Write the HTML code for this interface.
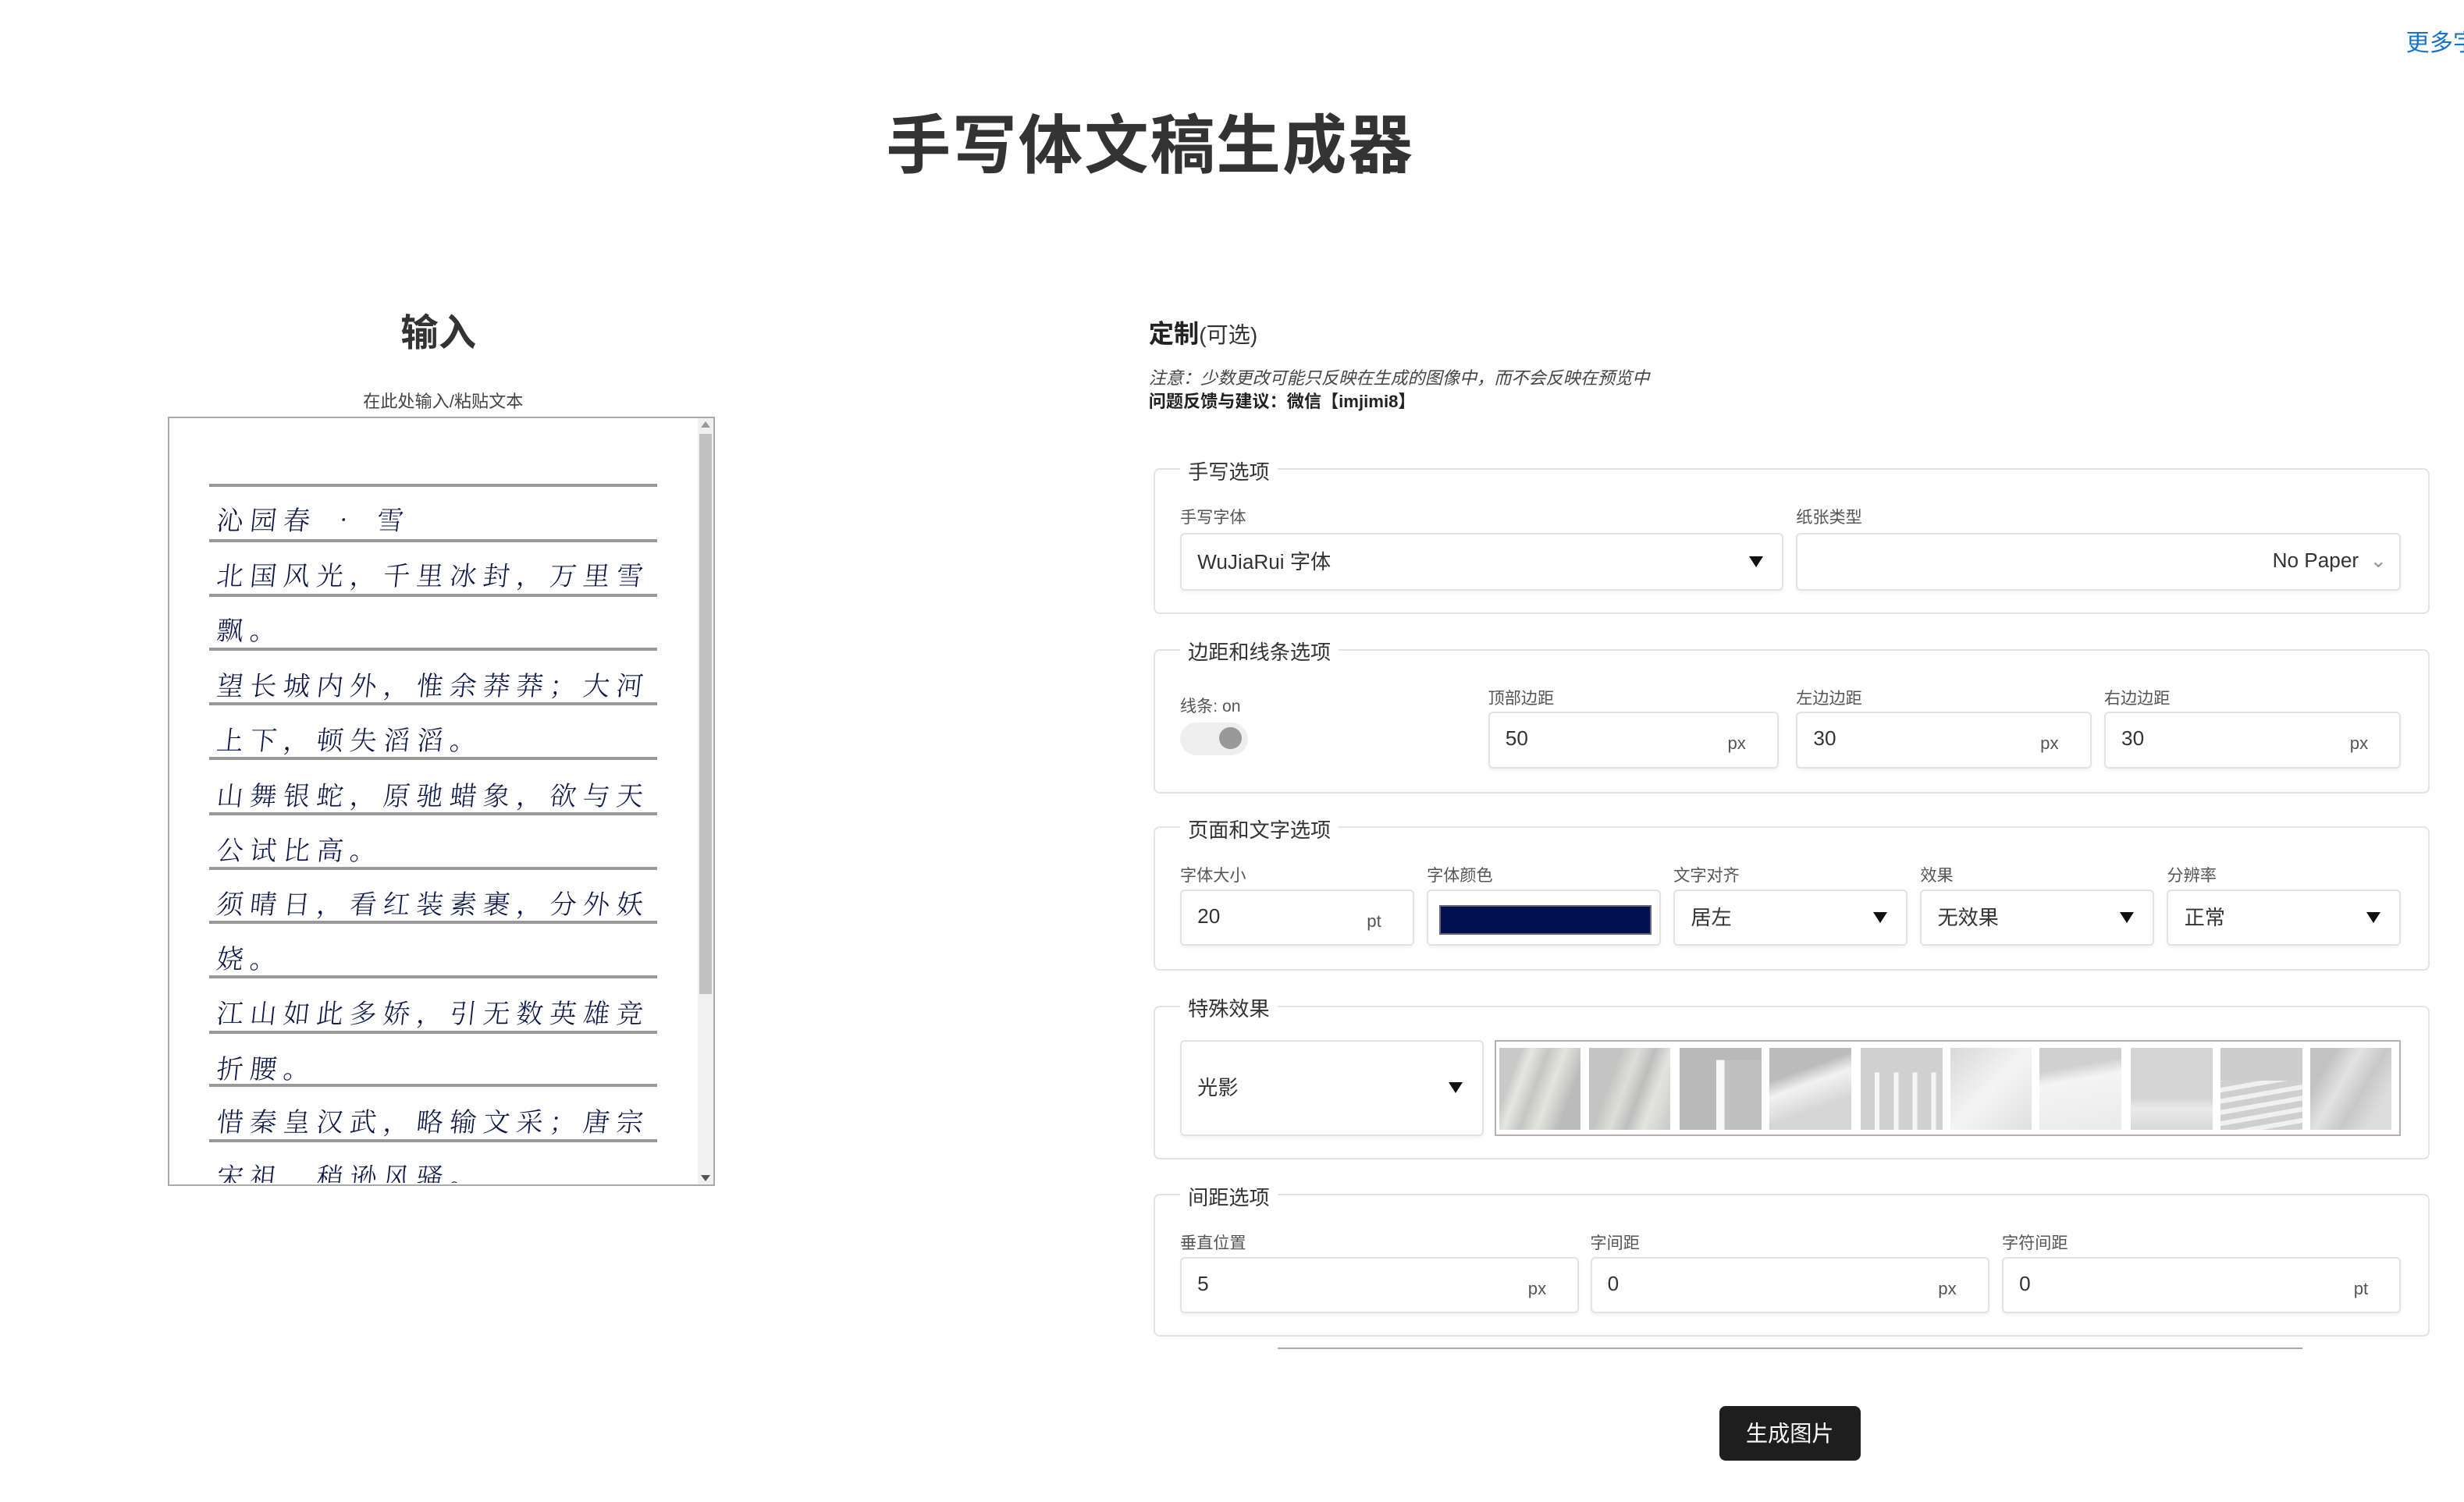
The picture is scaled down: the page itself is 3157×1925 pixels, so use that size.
<!DOCTYPE html>
<html><head><meta charset="utf-8">
<style>
html,body{margin:0;padding:0;background:#fff;width:3157px;height:1925px;overflow:hidden}
#w{position:relative;width:1568px;height:956px;zoom:2.01339;font-family:"Liberation Sans","Noto Sans CJK SC",sans-serif;color:#333}
.a{position:absolute;white-space:nowrap}
.fs{position:absolute;border:1px solid #e4e4e4;border-radius:4px;left:734px;width:810px}
.lg{position:absolute;left:16px;top:-9px;background:#fff;padding:0 5px;font-size:13px;color:#333}
.lb{position:absolute;font-size:10.5px;color:#555}
.in{position:absolute;border:1px solid #e3e3e3;border-radius:3px;box-shadow:0 1px 2px rgba(0,0,0,.06);background:#fff;font-size:13px;color:#333}
.in .v{position:absolute;left:10px;top:50%;transform:translateY(-55%)}
.in .u{position:absolute;right:20px;top:50%;transform:translateY(-30%);font-size:11px;color:#555}
.in .t{position:absolute;right:12px;top:50%;transform:translateY(-50%);width:0;height:0;border-left:4.5px solid transparent;border-right:4.5px solid transparent;border-top:7px solid #111}
.ln{position:absolute;left:133px;width:285px;height:2px;background:#999}
.hw{position:absolute;left:138px;font-family:"Noto Serif CJK SC","Liberation Serif",serif;font-size:17px;color:#0a1548;letter-spacing:4.2px;transform:skewX(-6deg);font-weight:300}
.tile{position:absolute;top:667px;width:52px;height:52px;background:#cfcfcf}
</style></head><body><div id="w">
<div class="a" style="left:1531px;top:15px;font-size:15px;color:#1a73c8">更多字体</div>
<div class="a" style="left:564px;top:59px;font-size:41px;font-weight:bold;color:#333;letter-spacing:1px">手写体文稿生成器</div>

<div class="a" style="left:255px;top:192px;font-size:24px;font-weight:bold">输入</div>
<div class="a" style="left:231px;top:247px;font-size:11px;color:#444">在此处输入/粘贴文本</div>
<div class="a" style="left:107px;top:265px;width:346px;height:488px;border:1px solid #aaa;overflow:hidden;background:#fff">
 <div style="position:absolute;right:0;top:0;width:10px;height:100%;background:#f1f1f1"></div>
 <div style="position:absolute;right:1px;top:10px;width:8px;height:357px;background:#c1c1c1"></div>
 <div style="position:absolute;right:2px;top:2px;border-left:3px solid transparent;border-right:3px solid transparent;border-bottom:4px solid #999"></div>
 <div style="position:absolute;right:2px;bottom:2px;border-left:3px solid transparent;border-right:3px solid transparent;border-top:4px solid #555"></div>
</div>
<div style="position:absolute;left:0;top:0;width:453px;height:753px;overflow:hidden">
<div class="ln" style="top:308px"></div><div class="ln" style="top:343px"></div><div class="ln" style="top:378px"></div><div class="ln" style="top:412px"></div><div class="ln" style="top:447px"></div><div class="ln" style="top:482px"></div><div class="ln" style="top:517px"></div><div class="ln" style="top:552px"></div><div class="ln" style="top:586px"></div><div class="ln" style="top:621px"></div><div class="ln" style="top:656px"></div><div class="ln" style="top:690px"></div><div class="ln" style="top:725px"></div>
<div class="hw" style="top:318px">沁园春 • 雪</div>
<div class="hw" style="top:353px">北国风光，千里冰封，万里雪</div>
<div class="hw" style="top:388px">飘。</div>
<div class="hw" style="top:423px">望长城内外，惟余莽莽；大河</div>
<div class="hw" style="top:458px">上下，顿失滔滔。</div>
<div class="hw" style="top:493px">山舞银蛇，原驰蜡象，欲与天</div>
<div class="hw" style="top:528px">公试比高。</div>
<div class="hw" style="top:562px">须晴日，看红装素裹，分外妖</div>
<div class="hw" style="top:597px">娆。</div>
<div class="hw" style="top:632px">江山如此多娇，引无数英雄竞</div>
<div class="hw" style="top:667px">折腰。</div>
<div class="hw" style="top:701px">惜秦皇汉武，略输文采；唐宗</div>
<div class="hw" style="top:736px">宋祖，稍逊风骚。</div>
</div>

<div class="a" style="left:731px;top:200px;font-size:16px;font-weight:bold;color:#222">定制<span style="font-weight:normal;font-size:14px;color:#333">(可选)</span></div>
<div class="a" style="left:731px;top:232px;font-size:11px;font-style:italic;color:#444">注意：少数更改可能只反映在生成的图像中，而不会反映在预览中</div>
<div class="a" style="left:731px;top:247px;font-size:11px;font-weight:bold;color:#222">问题反馈与建议：微信【imjimi8】</div>

<div class="fs" style="top:298px;height:91px"><div class="lg">手写选项</div></div>
<div class="lb" style="left:751px;top:321px">手写字体</div>
<div class="lb" style="left:1143px;top:321px">纸张类型</div>
<div class="in" style="left:751px;top:339px;width:382px;height:35px"><span class="v">WuJiaRui 字体</span><span class="t"></span></div>
<div class="in" style="left:1143px;top:339px;width:383px;height:35px"><span class="v" style="left:auto;right:26px">No Paper</span><span style="position:absolute;right:8px;top:9px;font-size:13px;color:#999">⌄</span></div>

<div class="fs" style="top:413px;height:90px"><div class="lg">边距和线条选项</div></div>
<div class="lb" style="left:751px;top:441px">线条: on</div>
<div class="a" style="left:751px;top:460px;width:43px;height:21px;border-radius:11px;background:#eee"></div>
<div class="a" style="left:776px;top:463px;width:14px;height:14px;border-radius:50%;background:#999"></div>
<div class="lb" style="left:947px;top:436px">顶部边距</div>
<div class="lb" style="left:1143px;top:436px">左边边距</div>
<div class="lb" style="left:1339px;top:436px">右边边距</div>
<div class="in" style="left:947px;top:453px;width:183px;height:34px"><span class="v">50</span><span class="u">px</span></div>
<div class="in" style="left:1143px;top:453px;width:186px;height:34px"><span class="v">30</span><span class="u">px</span></div>
<div class="in" style="left:1339px;top:453px;width:187px;height:34px"><span class="v">30</span><span class="u">px</span></div>

<div class="fs" style="top:526px;height:90px"><div class="lg">页面和文字选项</div></div>
<div class="lb" style="left:751px;top:549px">字体大小</div>
<div class="lb" style="left:908px;top:549px">字体颜色</div>
<div class="lb" style="left:1065px;top:549px">文字对齐</div>
<div class="lb" style="left:1222px;top:549px">效果</div>
<div class="lb" style="left:1379px;top:549px">分辨率</div>
<div class="in" style="left:751px;top:566px;width:147px;height:34px"><span class="v">20</span><span class="u">pt</span></div>
<div class="in" style="left:908px;top:566px;width:147px;height:34px"><div style="position:absolute;left:7px;top:9px;width:133px;height:17px;background:#001050;border:1px solid #667"></div></div>
<div class="in" style="left:1065px;top:566px;width:147px;height:34px"><span class="v">居左</span><span class="t"></span></div>
<div class="in" style="left:1222px;top:566px;width:147px;height:34px"><span class="v">无效果</span><span class="t"></span></div>
<div class="in" style="left:1379px;top:566px;width:147px;height:34px"><span class="v">正常</span><span class="t"></span></div>

<div class="fs" style="top:640px;height:96px"><div class="lg">特殊效果</div></div>
<div class="in" style="left:751px;top:662px;width:191px;height:59px"><span class="v">光影</span><span class="t"></span></div>
<div class="a" style="left:951px;top:662px;width:575px;height:59px;border:1px solid #b8aeb4"></div>
<div class="tile" style="left:954px;background:linear-gradient(110deg,#c9c9c9 20%,#e6e6e0 30%,#c5c5c5 45%,#e4e4dc 60%,#bbb 80%)"></div>
<div class="tile" style="left:1011px;background:linear-gradient(110deg,#c4c4c4 30%,#deded8 45%,#bdbdbd 60%,#e4e4de 75%,#c8c8c8)"></div>
<div class="tile" style="left:1069px;background:linear-gradient(180deg,#b9b9b9 15%,transparent 15%),linear-gradient(90deg,#b9b9b9 45%,#f8f8f8 45%,#f8f8f8 55%,#c0c0c0 55%)"></div>
<div class="tile" style="left:1126px;background:linear-gradient(160deg,#bbb 30%,#f2f2f2 45%,#d6d6d6 70%)"></div>
<div class="tile" style="left:1184px;background:linear-gradient(180deg,#d0d0d0 30%,transparent 30%),repeating-linear-gradient(90deg,#d0d0d0 0 9px,#f6f6f6 9px 12px)"></div>
<div class="tile" style="left:1241px;background:linear-gradient(135deg,#d8d8d8,#f4f4f4 50%,#e0e0e0)"></div>
<div class="tile" style="left:1298px;background:linear-gradient(170deg,#d0d0d0 25%,#f4f4f4 40%,#ececec 90%)"></div>
<div class="tile" style="left:1356px;background:linear-gradient(180deg,#d4d4d4 60%,#eaeaea 75%,#d8d8d8)"></div>
<div class="tile" style="left:1413px;background:linear-gradient(180deg,#cdcdcd 40%,transparent 40%),repeating-linear-gradient(170deg,#cfcfcf 0 4px,#f0f0f0 4px 7px)"></div>
<div class="tile" style="left:1470px;background:linear-gradient(120deg,#c2c2c2 20%,#e2e2e2 40%,#c8c8c8 60%,#dcdcdc 80%)"></div>

<div class="fs" style="top:760px;height:89px"><div class="lg">间距选项</div></div>
<div class="lb" style="left:751px;top:783px">垂直位置</div>
<div class="lb" style="left:1012px;top:783px">字间距</div>
<div class="lb" style="left:1274px;top:783px">字符间距</div>
<div class="in" style="left:751px;top:800px;width:252px;height:34px"><span class="v">5</span><span class="u">px</span></div>
<div class="in" style="left:1012px;top:800px;width:252px;height:34px"><span class="v">0</span><span class="u">px</span></div>
<div class="in" style="left:1274px;top:800px;width:252px;height:34px"><span class="v">0</span><span class="u">pt</span></div>

<div class="a" style="left:813px;top:858px;width:652px;height:1px;background:#b0a8a8"></div>
<div class="a" style="left:1094px;top:895px;width:90px;height:35px;background:#1e1e1e;border-radius:4px;color:#fff;font-size:14px;text-align:center;line-height:35px">生成图片</div>
</div></body></html>
